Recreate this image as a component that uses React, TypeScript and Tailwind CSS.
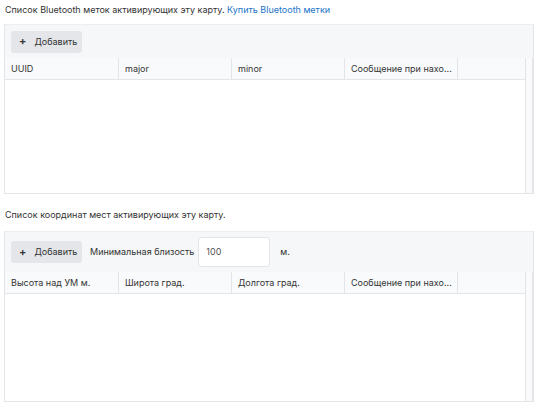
import React from 'react';

const font = { fontFamily: 'Inter, "Noto Sans", sans-serif' };

const PlusButton: React.FC = () => (
  <button className="flex h-[22px] w-[71px] items-center gap-[8px] rounded-[3px] bg-[#e4e6e9] px-[8px] text-[9px] text-[#333]">
    <span className="text-[11px] leading-none font-semibold">+</span>
    <span>Добавить</span>
  </button>
);

const Grid: React.FC<{ columns: string[]; bodyHeight: string }> = ({ columns, bodyHeight }) => (
  <div className="flex">
    <div className="flex-1">
      <div className="flex h-[22px] border-b border-[#e3e5e8] bg-[#f9fafb]">
        {columns.map((c, i) => (
          <div
            key={c}
            className={`flex ${i === 0 ? 'w-[114px]' : 'w-[113px]'} items-center border-r border-[#e3e5e8] px-[6px] text-[9px] text-[#333]`}
          >
            <span className="whitespace-nowrap">{c}</span>
          </div>
        ))}
        <div className="flex-1" />
      </div>
      <div className={`${bodyHeight} bg-white`} />
    </div>
    <div className="w-[8px] border-x border-[#e3e5e8] bg-[#fafafa]" />
  </div>
);

export default function App() {
  return (
    <div className="w-[540px] bg-white px-[4px] pt-[4px] pb-[6px]" style={font}>
      <p className="h-[20px] pl-[1px] text-[9px] leading-[12px] text-[#333]">
        Список Bluetooth меток активирующих эту карту.{' '}
        <a className="text-[#1a73c8]">Купить Bluetooth метки</a>
      </p>

      <div className="w-[530px] border-x border-b border-[#e3e5e8]">
        <div className="flex h-[34px] items-center border-t border-[#edeef0] bg-[#f6f7f8] px-[6px]">
          <PlusButton />
        </div>
        <Grid columns={['UUID', 'major', 'minor', 'Сообщение при нахо...']} bodyHeight="h-[113px]" />
      </div>

      <p className="mt-[15px] h-[22px] pl-[1px] text-[9px] leading-[12px] text-[#333]">
        Список координат мест активирующих эту карту.
      </p>

      <div className="w-[530px] border-x border-b border-[#e3e5e8]">
        <div className="flex h-[41px] items-center border-t border-[#edeef0] bg-[#f6f7f8] px-[6px]">
          <PlusButton />
          <span className="ml-[8px] text-[9px] text-[#333]">Минимальная близость</span>
          <div className="ml-[4px] flex h-[30px] w-[72px] items-center rounded-[3px] border border-[#e3e5e8] bg-white px-[7px] text-[9px] text-[#555]">
            100
          </div>
          <span className="ml-[10px] text-[9px] text-[#333]">м.</span>
        </div>
        <Grid
          columns={['Высота над УМ м.', 'Широта град.', 'Долгота град.', 'Сообщение при нахо...']}
          bodyHeight="h-[107px]"
        />
      </div>
    </div>
  );
}
